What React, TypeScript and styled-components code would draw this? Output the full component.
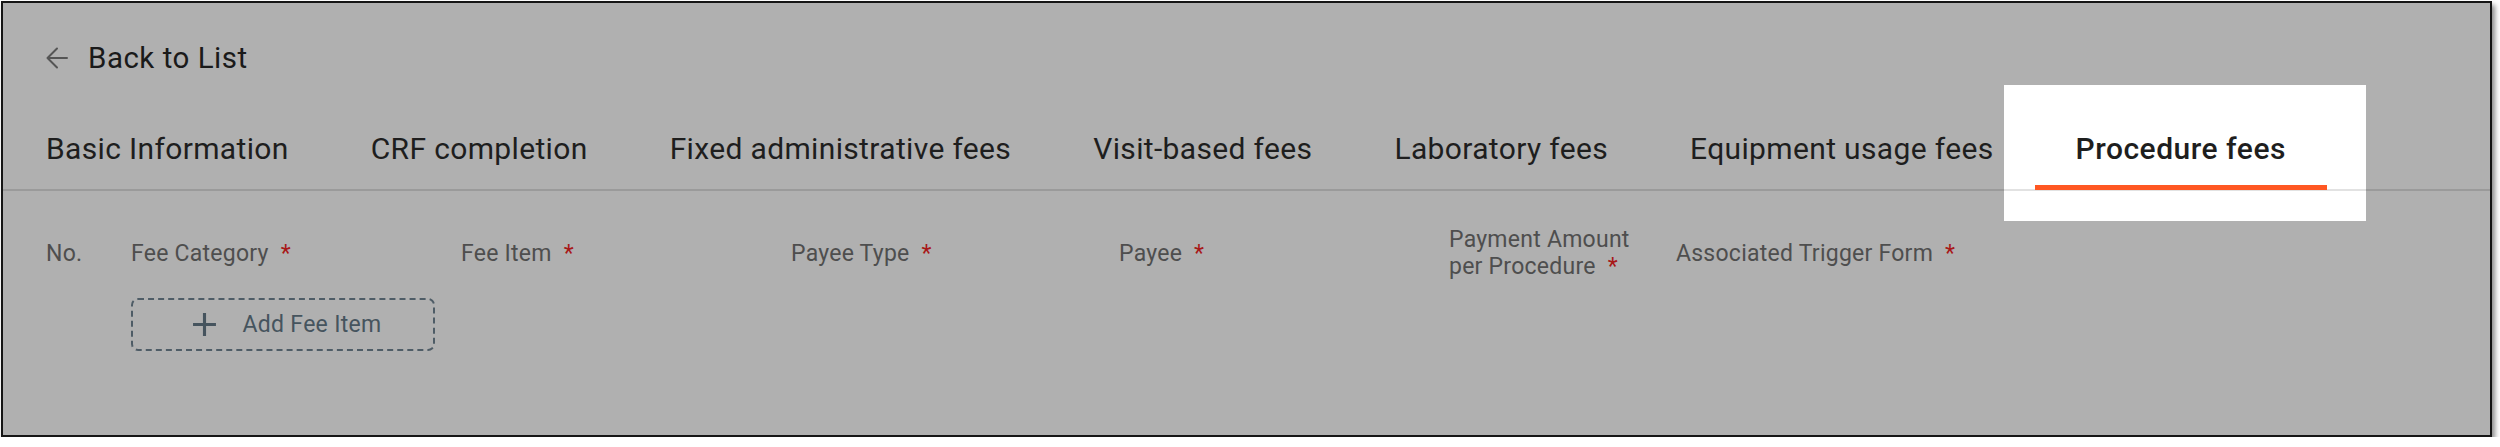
import styled, { createGlobalStyle } from "styled-components";

const GlobalStyle = createGlobalStyle`
  html, body {
    margin: 0;
    padding: 0;
    background: #ffffff;
  }
  body {
    font-family: Roboto, "Noto Sans", "Liberation Sans", sans-serif;
  }
`;

const tabs = [
  "Basic Information",
  "CRF completion",
  "Fixed administrative fees",
  "Visit-based fees",
  "Laboratory fees",
  "Equipment usage fees",
  "Procedure fees",
];

const columns = [
  { label: "No.", required: false },
  { label: "Fee Category", required: true },
  { label: "Fee Item", required: true },
  { label: "Payee Type", required: true },
  { label: "Payee", required: true },
  { label: "Payment Amount per Procedure", required: true },
  { label: "Associated Trigger Form", required: true },
];

const App = () => {
  const active = "Procedure fees";
  return (
    <>
      <GlobalStyle />
      <Frame>
        <BackRow>
          <svg width="22" height="22" viewBox="0 0 22 22" fill="none">
            <path d="M21 11H1.5M11 1.5 1.5 11l9.5 9.5" stroke="#555" strokeWidth="2" strokeLinecap="round" strokeLinejoin="round" />
          </svg>
          <span>Back to List</span>
        </BackRow>

        <TabBar>
          {tabs.map((t) => (
            <Tab key={t} $active={t === active}>
              {t}
            </Tab>
          ))}
        </TabBar>

        <HeaderRow>
          {columns.map((c) => (
            <HeadCell key={c.label}>
              <Label>
                {c.label}
                {c.required && <Req>*</Req>}
              </Label>
            </HeadCell>
          ))}
        </HeaderRow>

        <ButtonRow>
          <AddButton>
            <svg width="25" height="25" viewBox="0 0 24 24" fill="none">
              <path d="M12 1v22M1 12h22" stroke="#46545e" strokeWidth="3" />
            </svg>
            <span>Add Fee Item</span>
          </AddButton>
        </ButtonRow>
      </Frame>
    </>
  );
};

const Frame = styled.div`
  box-sizing: border-box;
  margin: 1px 0 0 1px;
  width: 2491px;
  height: 436px;
  border: 2px solid #151515;
  background: #b0b0b0;
  box-shadow: 3px 4px 5px rgba(0, 0, 0, 0.45);
  display: flex;
  flex-direction: column;
`;

const BackRow = styled.div`
  display: flex;
  align-items: center;
  gap: 20px;
  margin-top: 37px;
  padding-left: 43px;
  height: 36px;
  font-size: 29.5px;
  letter-spacing: 0.5px;
  line-height: 36px;
  color: #1a1a1a;
`;

const TabBar = styled.div`
  display: flex;
  margin-top: 55px;
  padding-left: 2px;
  border-bottom: 2px solid #9a9a9a;
`;

const Tab = styled.div<{ $active: boolean }>`
  position: relative;
  z-index: ${(p) => (p.$active ? 1 : "auto")};
  padding: 0 41px 22px;
  font-size: 30px;
  letter-spacing: ${(p) => (p.$active ? "0.5px" : "0.35px")};
  line-height: 36px;
  white-space: nowrap;
  font-weight: ${(p) => (p.$active ? 500 : 400)};
  color: #1e1e1e;

  &::before {
    content: "";
    display: ${(p) => (p.$active ? "block" : "none")};
    position: absolute;
    z-index: -1;
    left: -31px;
    right: -39px;
    top: -46px;
    bottom: -32px;
    background: linear-gradient(
      to bottom,
      #ffffff 0,
      #ffffff 104px,
      #e2e2e2 104px,
      #e2e2e2 106px,
      #ffffff 106px
    );
  }

  &::after {
    content: "";
    display: ${(p) => (p.$active ? "block" : "none")};
    position: absolute;
    left: 0;
    right: 0;
    bottom: -1px;
    height: 5px;
    background: #ff5722;
  }
`;

const HeaderRow = styled.div`
  display: grid;
  grid-template-columns: 85px 330px 330px 328px 330px 227px auto;
  align-items: center;
  margin-top: 35px;
  padding-left: 43px;
  min-height: 54px;
`;

const HeadCell = styled.div`
  padding-right: 24px;
`;

const Label = styled.div`
  font-size: 23px;
  letter-spacing: 0.25px;
  line-height: 27px;
  color: #4e4e4e;
`;

const Req = styled.span`
  margin-left: 12px;
  color: #a81818;
`;

const ButtonRow = styled.div`
  margin-top: 18px;
  padding-left: 128px;
`;

const AddButton = styled.button`
  box-sizing: border-box;
  width: 304px;
  height: 53px;
  display: flex;
  align-items: center;
  justify-content: center;
  gap: 26px;
  border: 2px dashed #4e5c66;
  border-radius: 7px;
  background: transparent;
  font-family: Roboto, "Noto Sans", "Liberation Sans", sans-serif;
  font-size: 23px;
  letter-spacing: 0.3px;
  color: #46545e;
  padding: 0 0 0 7px;
  cursor: pointer;
`;

export default App;
